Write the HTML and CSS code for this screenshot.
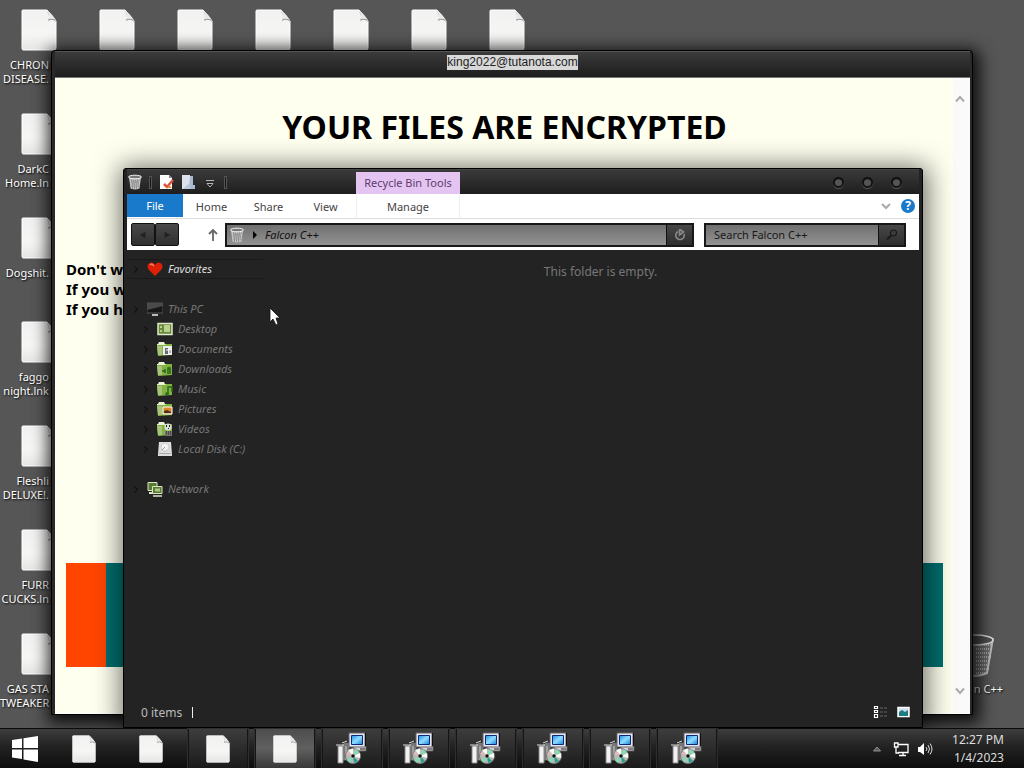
FILE: index.html
```html
<!DOCTYPE html>
<html lang="en">
<head>
<meta charset="utf-8">
<title>Desktop</title>
<link rel="stylesheet" href="styles.css">
</head>
<body>
<svg class="defs" aria-hidden="true">
  <defs>
    <linearGradient id="paper" x1="0" y1="0" x2="0" y2="1"><stop offset="0" stop-color="#f1f1f1"/><stop offset=".6" stop-color="#f6f7f4"/><stop offset="1" stop-color="#e6e6e4"/></linearGradient>
    <linearGradient id="glass" x1="0" y1="0" x2="1" y2="1"><stop offset="0" stop-color="#1c8fe8"/><stop offset=".5" stop-color="#8fdcff"/><stop offset="1" stop-color="#1581d8"/></linearGradient>
    <linearGradient id="mesh" x1="0" y1="0" x2="1" y2="0"><stop offset="0" stop-color="#999"/><stop offset=".5" stop-color="#e2e2e2"/><stop offset="1" stop-color="#999"/></linearGradient>
  </defs>
  <symbol id="doc" viewBox="0 0 36 42">
    <path d="M2 1H26L35 12V39Q35 41 33 41H2Q1 41 1 39V2Q1 1 2 1Z" fill="url(#paper)" stroke="#fff" stroke-width="1"/>
    <path d="M25 2Q30 6 27 12Q32 9 35 13L34 10Z" fill="#999"/><path d="M27 2Q31 5 35 11Q32 9 28 10Z" fill="#e9e9e9"/>
  </symbol>
  <symbol id="bin" viewBox="0 0 16 16">
    <path d="M2 3L3.500 14.500Q8 16.500 12.500 14.500L14 3Z" fill="#c4c4c4"/>
    <path d="M4 6H12.500M4 8H12M4.500 10H12M4.500 12H11.500M5 14H11" stroke="#555" stroke-width=".8" stroke-dasharray="1 1" fill="none"/>
    <path d="M5 7H12M5 9H12M5 11H11.500M5 13H11.500" stroke="#777" stroke-width=".8" stroke-dasharray="1 1" fill="none"/>
    <ellipse cx="8" cy="3" rx="6.500" ry="1.800" fill="#777" stroke="#f5f5f5"/>
  </symbol>
  <symbol id="setup" viewBox="0 0 32 34">
    <path d="M2 15L9 10H14V29H2Z" fill="#777" stroke="#111"/><path d="M2 14H7V31H2Z" fill="#f1f1f1" stroke="#888"/><path d="M0 13H8M6 11L11 9" stroke="#ddd" fill="none"/><path d="M10 14V28" stroke="#ccc"/>
    <path d="M17 14H30V19H17Z" fill="#d8d0d8" stroke="#555"/><path d="M24 17H29" stroke="#222"/>
    <path d="M13 1H29V15H13Z" fill="#e9e2ef" stroke="#666"/><path d="M29.500 1V14" stroke="#111"/>
    <path d="M15.500 3.500H26.500V12.500H15.500Z" fill="url(#glass)" stroke="#082c75"/>
    <circle cx="17" cy="24" r="7.500" fill="#b9bbb5" stroke="#777"/>
    <path d="M17 24L12 18L17 16.500ZM17 24L24 21L24 26Z" fill="#f5fff5"/><path d="M17 24L20 17L23 20ZM17 24L11 28L14 31Z" fill="#7be0b4"/><path d="M17 24L18 31L22 29Z" fill="#23a090"/><path d="M17 24L10 22L12 19Z" fill="#e5b8bd"/>
    <circle cx="17" cy="24" r="2" fill="#111" stroke="#ddd" stroke-width=".5"/>
  </symbol>
  <symbol id="folder" viewBox="0 0 16 16">
    <path d="M0 3H1L2 1H7L8 3H15V6H0Z" fill="#e9f2d5"/><path d="M0 4H8L9 3H15V14L1 15Z" fill="#82b340"/><path d="M0 5H5V14H1Z" fill="#a9c37f"/>
  </symbol>
</svg>

<main class="desktop">
  <div class="shortcuts">
    <div class="shortcut-column">
      <div class="shortcut"><svg class="file"><use href="#doc"/></svg><p>CHRON<br>DISEASE.</p></div>
      <div class="shortcut"><svg class="file"><use href="#doc"/></svg><p>DarkC<br>Home.ln</p></div>
      <div class="shortcut"><svg class="file"><use href="#doc"/></svg><p>Dogshit.</p></div>
      <div class="shortcut"><svg class="file"><use href="#doc"/></svg><p>faggo<br>night.lnk</p></div>
      <div class="shortcut"><svg class="file"><use href="#doc"/></svg><p>Fleshli<br>DELUXE!.</p></div>
      <div class="shortcut"><svg class="file"><use href="#doc"/></svg><p>FURR<br>CUCKS.ln</p></div>
      <div class="shortcut"><svg class="file"><use href="#doc"/></svg><p>GAS STA<br>TWEAKER</p></div>
    </div>
    <div class="shortcut"><svg class="file"><use href="#doc"/></svg></div>
    <div class="shortcut"><svg class="file"><use href="#doc"/></svg></div>
    <div class="shortcut"><svg class="file"><use href="#doc"/></svg></div>
    <div class="shortcut"><svg class="file"><use href="#doc"/></svg></div>
    <div class="shortcut"><svg class="file"><use href="#doc"/></svg></div>
    <div class="shortcut"><svg class="file"><use href="#doc"/></svg></div>
  </div>
  <div class="trash"><svg class="trash-icon" viewBox="0 0 40 44"><path d="M1 5L7 40Q19 46 31 40L37 5Z" fill="#6c6c6c"/><path d="M20 12H36M20 16H36M20 20H35M20 24H35M20 28H34M20 32H34M20 36H33M20 40H31" stroke="#a8a8a8" stroke-dasharray="1 1" stroke-width="2"/><path d="M37 5L31 40Q19 46 7 40" fill="none" stroke="#bbb" stroke-width="2"/><ellipse cx="19" cy="7" rx="18" ry="5" fill="#505050" stroke="#ddd" stroke-width="1.500"/></svg><p>n C++</p></div>

  <section class="window note">
    <header class="note-title"><span>king2022@tutanota.com</span></header>
    <div class="note-body">
      <div class="note-page">
        <h1>YOUR FILES ARE ENCRYPTED</h1>
        <div class="note-text"><p>Don't w</p><p>If you w</p><p>If you h</p></div>
        <div class="banner"></div>
      </div>
      <div class="scrollbar">
        <button aria-label="Scroll up"><svg class="arrow" viewBox="0 0 10 10"><path d="M1 7.500L5 3L9 7.500"/></svg></button>
        <button aria-label="Scroll down"><svg class="arrow" viewBox="0 0 10 10"><path d="M1 2.500L5 7L9 2.500"/></svg></button>
      </div>
    </div>
  </section>

  <section class="window explorer">
    <header class="explorer-title">
      <div class="quick">
        <svg class="icon"><use href="#bin"/></svg><i class="sep"></i>
        <button aria-label="Properties"><svg class="icon" viewBox="0 0 16 16"><path d="M2 1H11L14 4V15H2Z" fill="#fff"/><path d="M11 1V4H14Z" fill="#888"/><path d="M6 10L9 13L15 6" fill="none" stroke="#df5138" stroke-width="2.500"/><path d="M9 14L11 11L14 14Z" fill="#e98b38"/></svg></button>
        <button aria-label="New folder"><svg class="icon" viewBox="0 0 16 16"><path d="M2 1H10V15H2Z" fill="#dce3ee"/><path d="M10 2H13V11H15V15H9Z" fill="#aab9d0"/><path d="M3 15L10 8V15Z" fill="#bac8dd"/></svg></button>
        <button aria-label="Customize toolbar"><svg class="icon" viewBox="0 0 16 16"><path d="M4 6.500H12M5 9.500H11L8 13Z" fill="#111" stroke="#bbb"/></svg></button><i class="sep"></i>
      </div>
      <span class="context-title">Recycle Bin Tools</span>
      <div class="window-buttons"><button aria-label="Minimize"></button><button aria-label="Maximize"></button><button aria-label="Close"></button></div>
    </header>
    <div class="client">
      <nav class="tabs">
        <button class="tab file-tab">File</button><button class="tab">Home</button><button class="tab">Share</button><button class="tab">View</button><button class="tab manage">Manage</button>
        <span class="tabs-end">
          <button aria-label="Expand ribbon"><svg class="arrow" viewBox="0 0 10 10"><path d="M1 3L5 7L9 3"/></svg></button>
          <button class="help" aria-label="Help">?</button>
        </span>
      </nav>
      <div class="navbar">
        <div class="history"><button aria-label="Back"><svg viewBox="0 0 10 10"><path d="M8 1V9L1 5Z"/></svg></button><button aria-label="Forward"><svg viewBox="0 0 10 10"><path d="M2 1V9L9 5Z"/></svg></button></div>
        <span class="recent"></span>
        <button class="up" aria-label="Up"><svg viewBox="0 0 10 14"><path d="M5 13V2M1 6L5 2L9 6" fill="none" stroke="#666" stroke-width="1.800"/></svg></button>
        <div class="address">
          <svg class="icon"><use href="#bin"/></svg><svg class="crumb" viewBox="0 0 6 8"><path d="M1 0L5 4L1 8Z"/></svg><em>Falcon C++</em>
          <button class="field-button" aria-label="Refresh"><svg viewBox="0 0 12 12"><path d="M10 5A4.200 4.200 0 1 1 4 2.600M5.500 0V6L9.500 3Z" fill="none" stroke="#888" stroke-width="1.700"/></svg></button>
        </div>
        <div class="search">
          <input type="text" aria-label="Search" placeholder="Search Falcon C++">
          <button class="field-button" aria-label="Search"><svg viewBox="0 0 12 12"><circle cx="7.500" cy="4" r="3" fill="none" stroke="#191919" stroke-width="1.200"/><path d="M5 6.500L1 10.500" stroke="#191919" stroke-width="1.800"/></svg></button>
        </div>
      </div>
      <div class="content">
        <ul class="tree">
          <li class="favorites"><svg class="icon" viewBox="0 0 16 16"><path d="M8 15L2 9Q-1 5 2 2.500Q5.500 0 8 4Q10.500 0 14 2.500Q17 5 14 9Z" fill="#dd2008"/><path d="M3 4Q5 2 7 5" stroke="#ff7860" fill="none" stroke-width="1.500"/></svg>Favorites</li>
          <li class="group"><svg class="icon" viewBox="0 0 16 16"><path d="M0 2H16V12H0Z" fill="#171717" stroke="#555"/><path d="M0 2H16V5L0 9Z" fill="#4a4a4a"/><path d="M5 13H11V15H5Z" fill="#bbb"/></svg>This PC</li>
          <li class="child"><svg class="icon" viewBox="0 0 16 16"><path d="M1 2.500H15V13.500H1Z" fill="#648c38" stroke="#dfe8c9" stroke-width="1.500"/><path d="M3 5H5V7H3ZM3 9H5V11H3ZM7 4H13V11H7Z" fill="#bad08e"/></svg>Desktop</li>
          <li class="child"><svg class="icon" viewBox="0 0 16 16"><use href="#folder"/><path d="M6 5H15V14H6Z" fill="#eee"/><path d="M8 7H11V13H8ZM12 9H14V12H12Z" fill="#667"/><path d="M9 9H13V12" fill="none" stroke="#fff"/></svg>Documents</li>
          <li class="child"><svg class="icon" viewBox="0 0 16 16"><use href="#folder"/><path d="M5 10H8M8 8V12M11 13V7H13V13" fill="none" stroke="#286419" stroke-width="1.500"/></svg>Downloads</li>
          <li class="child"><svg class="icon" viewBox="0 0 16 16"><use href="#folder"/><path d="M11 13V6H15V11" fill="none" stroke="#2c681d" stroke-width="1.500"/><circle cx="10" cy="13" r="1.800" fill="#2c681d"/></svg>Music</li>
          <li class="child"><svg class="icon" viewBox="0 0 16 16"><use href="#folder"/><path d="M6 6H15V13H6Z" fill="#e08525" stroke="#fff"/><path d="M7 10L10 9L14 11V12H7Z" fill="#432"/></svg>Pictures</li>
          <li class="child"><svg class="icon" viewBox="0 0 16 16"><use href="#folder"/><circle cx="11" cy="6" r="3.500" fill="#ddd"/><path d="M9 4H10V6H9ZM12 4H13V6H12ZM11 7H12V8H11Z" fill="#222"/><path d="M8 10H15V15H8Z" fill="#777"/><path d="M9 11H14M9 13H14" stroke="#222" stroke-dasharray="1 1"/></svg>Videos</li>
          <li class="child"><svg class="icon" viewBox="0 0 16 16"><path d="M2 1H14L15 13V15H1V13Z" fill="#ddd"/><circle cx="8" cy="6" r="4" fill="#f3f3f3" stroke="#ccc"/><path d="M2 12.500H14" stroke="#aaa"/><path d="M8 6L5 9" stroke="#999"/></svg>Local Disk (C:)</li>
          <li class="group"><svg class="icon" viewBox="0 0 16 16"><path d="M1 1.500H10V9.500H1Z" fill="#567b31" stroke="#dce5c8"/><path d="M2 12H8" stroke="#dce5c8" stroke-width="2"/><path d="M5.500 5.500H15V12.500H5.500Z" fill="#567b31" stroke="#dce5c8"/><path d="M8 7.500H13V10.500H8Z" fill="#acc787"/><path d="M6 15H15" stroke="#dce5c8" stroke-width="1.500"/></svg>Network</li>
        </ul>
        <p class="empty">This folder is empty.</p>
      </div>
      <footer class="status"><span class="count">0 items</span>
        <span class="views">
          <button aria-label="Details view"><svg viewBox="0 0 15 14"><path d="M1.500 1.500h3v2h-3zM1.500 5.500h3v2h-3zM1.500 9.500h3v3h-3z" fill="#222" stroke="#fff" stroke-width="1.200"/><path d="M7 3H15M7 7H15M7 11H15" stroke="#666" stroke-dasharray="3 1"/></svg></button>
          <button aria-label="Thumbnail view"><svg viewBox="0 0 15 14"><path d="M2 2.500H13V11.500H2Z" fill="#cde" stroke="#fff" stroke-width="1.500"/><path d="M3 7L6 5L9 7L12 5V11H3Z" fill="#1c7c80"/></svg></button>
        </span>
      </footer>
    </div>
  </section>
  <svg class="pointer" viewBox="0 0 12 19"><path d="M1 1V15L4 12L7 18L9 17L7 11H11Z" fill="#fff" stroke="#111" stroke-width=".8"/></svg>
</main>

<footer class="taskbar">
  <button class="start" aria-label="Start"><svg viewBox="0 0 26 26"><path d="M0 4L10 2.500V12H0ZM11.500 2.300L26 0V12H11.500ZM0 13.500H10V23L0 21.500ZM11.500 13.500H26V26L11.500 23.500Z" fill="#fff"/></svg></button>
  <div class="tasks">
    <button class="task" aria-label="File"><svg class="task-file"><use href="#doc"/></svg></button>
    <button class="task" aria-label="File"><svg class="task-file"><use href="#doc"/></svg></button>
    <button class="task open" aria-label="File"><svg class="task-file"><use href="#doc"/></svg></button>
    <button class="task open active" aria-label="File"><svg class="task-file"><use href="#doc"/></svg></button>
    <button class="task open" aria-label="Setup"><svg class="task-app"><use href="#setup"/></svg></button>
    <button class="task open" aria-label="Setup"><svg class="task-app"><use href="#setup"/></svg></button>
    <button class="task open" aria-label="Setup"><svg class="task-app"><use href="#setup"/></svg></button>
    <button class="task open" aria-label="Setup"><svg class="task-app"><use href="#setup"/></svg></button>
    <button class="task open" aria-label="Setup"><svg class="task-app"><use href="#setup"/></svg></button>
    <button class="task open" aria-label="Setup"><svg class="task-app"><use href="#setup"/></svg></button>
  </div>
  <div class="tray">
    <button aria-label="Show hidden icons"><svg viewBox="0 0 16 16"><path d="M4.500 10L8 6L11.500 10Z" fill="#555" stroke="#aaa" stroke-width=".8"/></svg></button>
    <button aria-label="Network"><svg viewBox="0 0 16 16"><path d="M5 3.500H15V11.500H5M10 12V14M6 14.500H13" fill="none" stroke="#fff" stroke-width="1.300"/><path d="M1.500 2H5V6H1.500ZM3 6V12H6" fill="none" stroke="#fff" stroke-width="1.300"/></svg></button>
    <button aria-label="Volume"><svg viewBox="0 0 16 16"><path d="M1 6H3L7 2V14L3 11H1Z" fill="#fff"/><path d="M9 6Q11 8 9 10M11 4Q14 8 11 12M13 2.500Q17 8 13 13.500" fill="none" stroke="#ddd"/></svg></button>
    <p class="clock">12:27 PM<br>1/4/2023</p>
  </div>
</footer>
</body>
</html>
```
FILE: styles.css
```css
* { box-sizing: border-box; }
body {
  margin: 0;
  height: 100vh;
  display: flex;
  flex-direction: column;
  overflow: hidden;
  background: #565656;
  font: 11px/14px "Noto Sans", "Open Sans", sans-serif;
}
p, ul, h1 { margin: 0; padding: 0; }
button { padding: 0; border: 0; background: none; font: inherit; color: inherit; display: flex; align-items: center; justify-content: center; }
svg { display: block; flex: none; }
.defs { position: absolute; width: 0; height: 0; }
.icon { width: 16px; height: 16px; }

.desktop { position: relative; flex: 1; min-height: 0; }
.shortcuts { display: flex; }
.shortcut { width: 78px; height: 104px; padding-top: 9px; color: #fff; text-shadow: 1px 1px 2px #000; }
.shortcut p { width: 49px; margin-top: 7px; text-align: right; white-space: nowrap; }
.file { width: 36px; height: 42px; margin-left: 21px; }
.trash { position: absolute; right: 21px; bottom: 32px; display: flex; flex-direction: column; align-items: flex-end; gap: 5px; color: #fff; text-shadow: 1px 1px 2px #000; }
.trash-icon { width: 40px; height: 44px; margin-right: 7px; }

.window { position: absolute; display: flex; flex-direction: column; border: 1px solid #000; }
.note {
  inset: 50px 51px 13px 51px;
  padding: 0 2px 0 3px;
  border-radius: 4px 4px 0 0;
  background: #292929;
  box-shadow: 2px 4px 16px 5px #000000d0;
}
.note-title {
  height: 26px;
  display: flex;
  align-items: flex-start;
  justify-content: center;
  padding-top: 3px;
  border-top: 1px solid #555;
  background: linear-gradient(#3b3b3b, #1d1d1d);
}
.note-title span { background: #d8d8d8; color: #222; font: 12px/15px "Liberation Sans", sans-serif; }
.note-body { flex: 1; min-height: 0; display: flex; border-top: 1px solid #777; border-bottom: 1px solid #fff; background: #fffff0; }
.note-page { flex: 1; display: flex; flex-direction: column; padding: 28px 10px 46px 11px; color: #000; }
.note h1 { font: bold 32px/42px "Noto Sans", sans-serif; text-align: center; white-space: nowrap; }
.note-text { margin-top: 111px; font: bold 15px/20px "Noto Sans", sans-serif; }
.banner { height: 104px; margin-top: auto; background: #007070; border-left: 40px solid #ff4500; }
.scrollbar { width: 17px; padding: 16px 4px 17px 0; display: flex; flex-direction: column; justify-content: space-between; align-items: center; background: #fafafa; }
.arrow { width: 10px; height: 10px; fill: none; stroke: #aaa; stroke-width: 2; }

.explorer {
  inset: 168px 101px 0 123px;
  padding: 0 3px;
  border-radius: 3px 3px 0 0;
  background: #232323;
  box-shadow: 1px 2px 26px 4px #00000090;
}
.explorer-title { display: flex; height: 25px; border-top: 1px solid #444; background: linear-gradient(#3a3a3a, #1e1e1e); }
.quick { flex: none; width: 229px; display: flex; align-items: center; gap: 6px; }
.sep { width: 3px; height: 13px; border: 1px solid #555; background: #161616; }
.context-title { width: 104px; margin-top: 2px; background: #e4c5f1; color: #5c3b70; line-height: 22px; text-align: center; white-space: nowrap; }
.window-buttons { margin-left: auto; padding-right: 17px; display: flex; align-items: center; gap: 18px; }
.window-buttons button { width: 11px; height: 11px; border-radius: 50%; background: #555; box-shadow: inset 0 2px 1px #111, inset 0 0 0 2px #151515, 0 1px 0 #555; }
.client { flex: 1; min-height: 0; display: flex; flex-direction: column; }
.tabs { display: flex; height: 25px; background: #fff; border-bottom: 1px solid #ddd; color: #444; }
.tab { width: 57px; height: 24px; padding-top: 2px; }
.file-tab { width: 56px; height: 23px; padding: 0; background: #1979ca; color: #fff; }
.manage { width: 104px; margin-left: 2px; border: solid #eee; border-width: 0 1px; }
.tabs-end { margin-left: auto; display: flex; align-items: center; gap: 10px; padding-right: 4px; }
.help { width: 14px; height: 14px; border-radius: 50%; background: #1979ca; color: #fff; font-weight: bold; font-size: 12px; }
.navbar { display: flex; align-items: center; height: 31px; padding: 0 13px 0 4px; background: #fff; }
.history { display: flex; width: 48px; height: 23px; }
.history button { flex: 1; border: 1px solid #111; border-radius: 2px; background: linear-gradient(#494949, #303030); }
.history svg { width: 8px; height: 8px; fill: #222; }
.recent { width: 27px; }
.up { width: 14px; }
.up svg { width: 10px; height: 14px; }
.address, .search { display: flex; align-items: center; height: 24px; border: 2px solid #181818; background: linear-gradient(#707070, #929292); color: #111; }
.address { flex: 1; margin-left: 5px; padding-left: 2px; }
.crumb { width: 6px; height: 8px; margin: 0 7px; }
.field-button { align-self: stretch; width: 26px; margin-left: auto; border-left: 1px solid #111; background: linear-gradient(#474747, #2e2e2e); }
.field-button svg { width: 12px; height: 12px; }
.search { width: 202px; margin-left: 10px; }
.search input { flex: 1; min-width: 0; padding: 0 8px; border: 0; background: none; font: inherit; }
.search input::placeholder { color: #181818; opacity: 1; }
.content { flex: 1; min-height: 0; display: flex; }
.tree { width: 136px; padding-top: 9px; list-style: none; color: #777; font-style: italic; }
.tree li { display: flex; align-items: center; gap: 5px; height: 20px; padding-left: 19px; white-space: nowrap; }
.tree li::before { content: ""; width: 4px; height: 4px; margin-left: -14px; margin-right: 5px; border: solid #111; border-width: 1px 1px 0 0; transform: rotate(45deg); }
.tree .child { padding-left: 29px; }
.tree .group { margin-top: 20px; }
.tree .favorites { color: #ddd; border: solid #1a1a1a; border-width: 1px 0; }
.empty { flex: 1; margin: 0 6px 0 25px; padding-top: 15px; text-align: center; font-size: 12px; color: #777; }
.status { display: flex; align-items: center; justify-content: space-between; height: 30px; padding: 0 8px 0 14px; color: #bbb; font-size: 12px; }
.count { padding-right: 10px; border-right: 1px solid #eee; line-height: 11px; }
.views { display: flex; gap: 8px; }
.views svg { width: 15px; height: 14px; }
.pointer { position: absolute; left: 269px; top: 307px; width: 12px; height: 19px; }

.taskbar { position: relative; flex: none; height: 40px; display: flex; border-top: 1px solid #0a0a0a; background: linear-gradient(#3d3d3d, #222 45%, #0d0d0d); }
.start { width: 50px; }
.start svg { width: 26px; height: 26px; }
.tasks { display: flex; gap: 7px; padding-left: 4px; }
.task { width: 60px; }
.open { border: 1px solid #151515; border-width: 0 1px; box-shadow: 0 0 0 1px #2e2e2e; background: linear-gradient(#3d3d3d, #1b1b1b); }
.active { background: linear-gradient(#4d4d4d, #606060 50%, #383838); }
.task-file { width: 24px; height: 28px; }
.task-app { width: 32px; height: 34px; }
.tray { margin-left: auto; display: flex; align-items: center; gap: 8px; padding-right: 20px; color: #ddd; }
.tray svg { width: 16px; height: 16px; }
.clock { margin-left: 11px; font-size: 12px; line-height: 18px; text-align: right; }
```
